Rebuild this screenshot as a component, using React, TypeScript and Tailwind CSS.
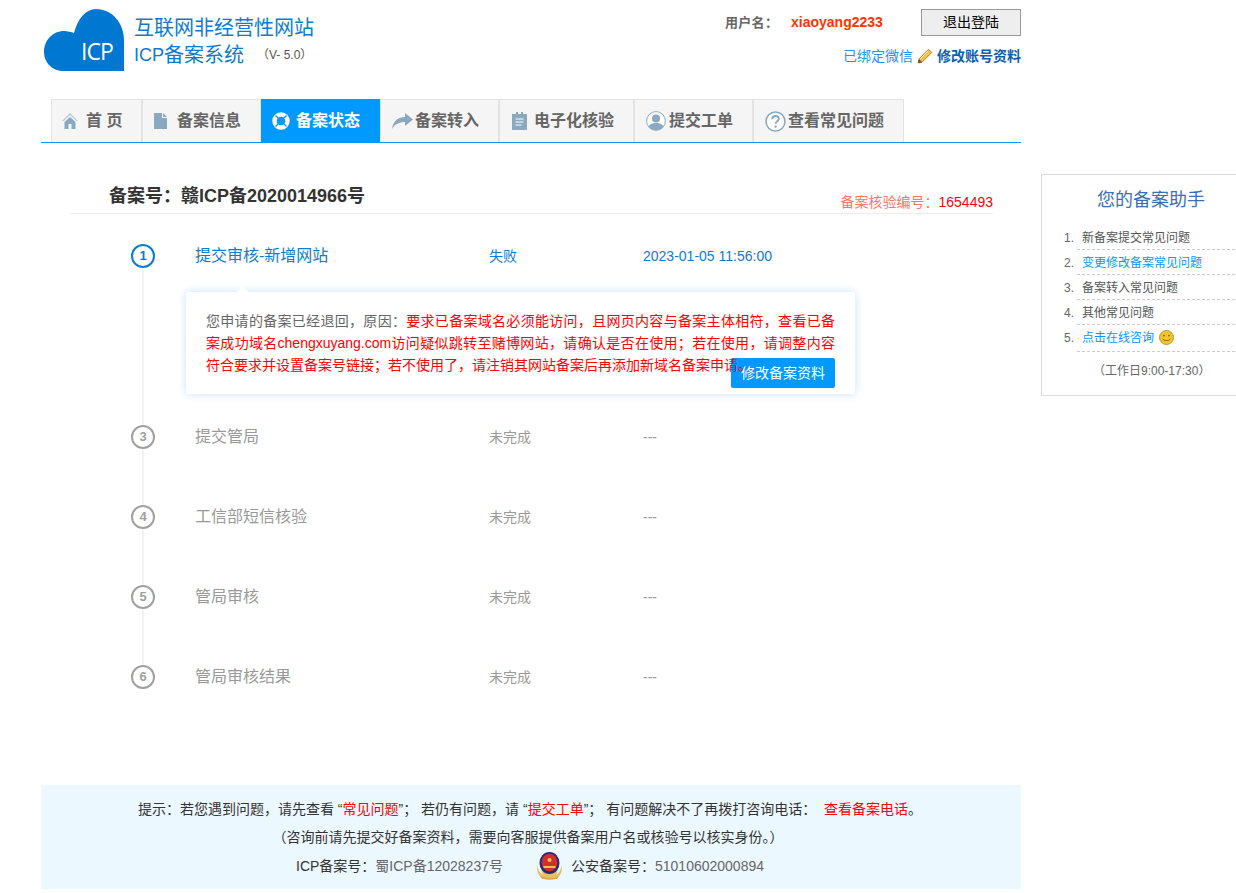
import React from "react";

const Home = () => (
  <svg width="16" height="18" viewBox="0 0 16 18" fill="#8aa8bf">
    <path d="M8 1 0 9h1.600L8 3l6.400 6H16Z" fill="#b7cad8" />
    <path d="M8 5 2.500 10v7h4v-5h3v5h4v-7Z" />
  </svg>
);
const FileIcon = () => (
  <svg width="13" height="16" viewBox="0 0 13 16" fill="#8aa8bf">
    <path d="M0 0h8v5h5v11H0Z" />
    <path d="M9 0l4 4H9Z" />
  </svg>
);
const Buoy = () => (
  <svg width="18" height="18" viewBox="0 0 18 18">
    <circle cx="9" cy="9" r="6.500" fill="none" stroke="#fff" strokeWidth="4.400" />
    <path d="M3.500 3.500 6.500 6.500M14.500 3.500l-3 3M3.500 14.500l3-3M14.500 14.500l-3-3" stroke="#0099ff" strokeWidth="1.300" />
  </svg>
);
const Arrow = () => (
  <svg width="21" height="16" viewBox="0 0 21 16" fill="#8aa8bf">
    <path d="M13 0l8 6.500L13 13V9C7 9 3 11 0 16 1 9 5 4 13 4Z" />
  </svg>
);
const Clip = () => (
  <svg width="15" height="18" viewBox="0 0 15 18">
    <path d="M0 2h4V0h2v2h3V0h2v2h4v16H0Z" fill="#8aa8bf" />
    <path d="M3.500 7h8M3.500 10h8M3.500 13h6" stroke="#fff" strokeWidth="1" />
  </svg>
);
const User = () => (
  <svg width="20" height="20" viewBox="0 0 20 20">
    <circle cx="10" cy="10" r="9.400" fill="#fff" stroke="#8aa8bf" strokeWidth="1" />
    <circle cx="10" cy="7.600" r="4" fill="#8aa8bf" />
    <path d="M2.600 15.500C4 12.500 7 12 10 12s6 .5 7.400 3.500A9 9 0 0 1 10 19a9 9 0 0 1-7.400-3.500Z" fill="#8aa8bf" />
  </svg>
);
const Question = () => (
  <svg width="21" height="21" viewBox="0 0 21 21">
    <circle cx="10.500" cy="10.500" r="9.500" fill="#fff" stroke="#8aa8bf" strokeWidth="1.600" />
    <path d="M7.200 8.200c0-2 1.500-3.200 3.400-3.200s3.200 1.100 3.200 2.800c0 2.500-3.200 2.500-3.200 5" fill="none" stroke="#8aa8bf" strokeWidth="1.900" />
    <circle cx="10.600" cy="15.600" r="1.200" fill="#8aa8bf" />
  </svg>
);
const Pencil = () => (
  <svg width="16" height="16" viewBox="0 0 16 16">
    <path d="M11.500 1.200 14.800 4.500 5 14.300 1.200 15 1.900 11Z" fill="#f2c14e" stroke="#a87a2a" strokeWidth="0.900" />
    <path d="M1.200 15l.7-4 3.100 3.300Z" fill="#6b4a24" />
    <path d="M3.500 10.500 11 3" stroke="#fff3c4" strokeWidth="1" />
  </svg>
);
const Smile = () => (
  <svg width="15" height="15" viewBox="0 0 15 15" className="inline-block ml-[5px] align-[-3px]">
    <circle cx="7.500" cy="7.500" r="7" fill="#f2c52a" stroke="#a88a20" strokeWidth="0.800" />
    <circle cx="5" cy="5.600" r="0.900" fill="#7a5a10" />
    <circle cx="10" cy="5.600" r="0.900" fill="#7a5a10" />
    <path d="M3.800 8.800c1 2.400 6.400 2.400 7.400 0" fill="none" stroke="#7a5a10" strokeWidth="0.900" />
  </svg>
);
const Emblem = () => (
  <svg width="29" height="30" viewBox="0 0 29 30">
    <path d="M14.500 29C6 29 1 23 2 14c1 5 3 8 6 10-2-4-3-8-2-11 2-6 15-6 17 0 1 3 0 7-2 11 3-2 5-5 6-10 1 9-4 15-12.500 15Z" fill="#e8bd6a" />
    <ellipse cx="14.500" cy="12" rx="10" ry="11" fill="#1c2a80" />
    <ellipse cx="14.500" cy="11.500" rx="8" ry="9" fill="#d22f2a" />
    <circle cx="14.500" cy="9" r="2" fill="#f2c14e" />
    <path d="M8.500 15h12v2h-12Z" fill="#f2c14e" />
    <path d="M5 25c5 3 14 3 19 0l-2 3H7Z" fill="#d9a344" />
  </svg>
);

const tabs = [
  { t: "首 页", w: "w-[91px]", pl: "pl-[10px]", gap: "gap-[8px]", icon: <Home /> },
  { t: "备案信息", w: "w-[119px]", pl: "pl-[11px]", gap: "gap-[10px]", icon: <FileIcon /> },
  { t: "备案状态", w: "w-[119px]", pl: "pl-[10px]", gap: "gap-[6px]", icon: <Buoy />, active: true },
  { t: "备案转入", w: "w-[119px]", pl: "pl-[11px]", gap: "gap-[2px]", icon: <Arrow /> },
  { t: "电子化核验", w: "w-[135px]", pl: "pl-[12px]", gap: "gap-[7px]", icon: <Clip /> },
  { t: "提交工单", w: "w-[119px]", pl: "pl-[11px]", gap: "gap-[3px]", icon: <User /> },
  { t: "查看常见问题", w: "w-[151px]", pl: "pl-[11px]", gap: "gap-[2px]", icon: <Question /> },
];

const steps = [
  { n: 3, t: "提交管局" },
  { n: 4, t: "工信部短信核验" },
  { n: 5, t: "管局审核" },
  { n: 6, t: "管局审核结果" },
];

const help = [
  { t: "新备案提交常见问题", c: "text-[#555]" },
  { t: "变更修改备案常见问题", c: "text-[#0099ff]" },
  { t: "备案转入常见问题", c: "text-[#555]" },
  { t: "其他常见问题", c: "text-[#555]" },
];

const font = "[font-family:'Liberation_Sans','Noto_Sans_CJK_SC',sans-serif]";

export default function App() {
  return (
    <div className={`${font} w-full overflow-hidden bg-white h-[893px] flex items-start`}>
      <div className="w-[980px] ml-[41px] shrink-0">
        {/* header */}
        <header className="h-[99px] flex justify-between items-start">
          <div className="flex items-start pl-[3px] pt-[9px]">
            <div className="relative w-[80px] h-[62px]">
              <svg width="80" height="62" viewBox="0 0 80 62">
                <path
                  d="M19 62C8 62 0 53 0 43 0 31 9 22 20 22c4 0 7 1 10 2C34 9 42 0 52 0c16 0 28 14 28 31v31Z"
                  fill="#0077d0"
                />
              </svg>
              <span className="absolute left-[37px] top-[27px] text-[23px] leading-[30px] text-white font-['Open_Sans'] tracking-[-1px]">
                ICP
              </span>
            </div>
            <div className="ml-[10px] pt-[6px] text-[#0a7cd0]">
              <div className="text-[20px] leading-[27px]">互联网非经营性网站</div>
              <div className="text-[20px] leading-[27px] flex items-center">
                <span className="text-[18px]">ICP</span>备案系统
                <span className="ml-[13px] text-[12px] text-[#555]">（V- 5.0）</span>
              </div>
            </div>
          </div>
          <div className="pt-[9px] flex flex-col items-end">
            <div className="flex items-center h-[27px]">
              <span className="text-[13px] font-bold text-[#666] w-[66px] tracking-[0.3px]">用户名：</span>
              <span className="text-[14px] font-bold text-[#ff3300] w-[130px]">xiaoyang2233</span>
              <button className="w-[100px] h-[27px] border border-[#999] bg-[#eeeeee] text-[14px] text-black">
                退出登陆
              </button>
            </div>
            <div className="flex items-center mt-[10px] h-[20px] text-[14px]">
              <span className="text-[#1a96f0]">已绑定微信</span>
              <span className="ml-[4px] mr-[4px] flex"><Pencil /></span>
              <span className="font-bold text-[#0b5fb0]">修改账号资料</span>
            </div>
          </div>
        </header>

        {/* nav */}
        <nav className="h-[44px] border-b border-[#0099ff] pl-[10px] flex">
          {tabs.map((tab) => (
            <div
              key={tab.t}
              className={`${tab.w} ${tab.pl} ${tab.gap} h-[43px] flex items-center text-[16px] font-bold border-t border-l border-r ${
                tab.active
                  ? "bg-[#0099ff] border-[#0099ff] text-white"
                  : "bg-[#f5f5f5] border-[#e3e3e3] text-[#666]"
              }`}
            >
              <span className="flex">{tab.icon}</span>
              <span className="whitespace-pre">{tab.t}</span>
            </div>
          ))}
        </nav>

        {/* main */}
        <main className="ml-[29px] w-[923px]">
          <div className="mt-[37px] h-[34px] border-b border-[#eeeeee] flex justify-between items-start">
            <h1 className="pl-[39px] text-[18px] font-bold leading-[32px] text-[#333]">备案号：赣ICP备2020014966号</h1>
            <div className="pt-[11px] text-[14px] leading-[22px]">
              <span className="text-[#ff7468]">备案核验编号：</span>
              <span className="text-[#ff0000]">1654493</span>
            </div>
          </div>

          <div className="relative mt-[22px]">
            <div className="absolute left-[72px] top-[20px] w-[2px] h-[420px] bg-[#f3f3f3]" />
            {/* step 1 */}
            <div className="relative h-[40px] flex items-center">
              <div className="ml-[61px] w-[24px] h-[24px] rounded-full border-2 border-[#0a7cd0] bg-white flex items-center justify-center text-[13px] font-bold text-[#0a7cd0]">
                1
              </div>
              <div className="ml-[40px] w-[294px] text-[16px] text-[#0a7cd0]">提交审核-新增网站</div>
              <div className="w-[154px] text-[14px] text-[#0a7cd0]">失败</div>
              <div className="text-[14px] text-[#0a7cd0]">2023-01-05 11:56:00</div>
            </div>
            {/* card */}
            <div className="relative mt-[16px] ml-[116px] w-[669px] h-[102px] bg-white rounded-[3px] shadow-[0_0_10px_rgba(0,115,230,0.22)] px-[20px] pt-[18px] text-[14px] leading-[22px] text-[#666]">
              <div className="absolute left-[52px] top-[-4px] w-[9px] h-[9px] rotate-45 bg-white" />
              <button className="absolute right-[20px] bottom-[6px] w-[104px] h-[30px] rounded-[2px] bg-[#0099ff] text-white text-[14px]">
                修改备案资料
              </button>
              <p className="relative text-justify">
                您申请的备案已经退回，原因：
                <span className="text-[#ff0000]">
                  要求已备案域名必须能访问，且网页内容与备案主体相符，查看已备案成功域名chengxuyang.com访问疑似跳转至赌博网站，请确认是否在使用；若在使用，请调整内容符合要求并设置备案号链接；若不使用了，请注销其网站备案后再添加新域名备案申请。
                </span>
              </p>
            </div>
            {/* remaining */}
            <div className="mt-[23px] flex flex-col gap-[40px]">
              {steps.map((s) => (
                <div key={s.n} className="relative h-[40px] flex items-center">
                  <div className="ml-[61px] w-[24px] h-[24px] rounded-full border-2 border-[#a0a0a0] bg-white flex items-center justify-center text-[13px] font-bold text-[#a0a0a0]">
                    {s.n}
                  </div>
                  <div className="ml-[40px] w-[294px] text-[16px] text-[#999]">{s.t}</div>
                  <div className="w-[154px] text-[14px] text-[#999]">未完成</div>
                  <div className="text-[14px] text-[#999]">---</div>
                </div>
              ))}
            </div>
          </div>
        </main>

        {/* footer */}
        <footer className="mt-[88px] h-[104px] bg-[#ecf8ff] pt-[10px] flex flex-col items-center text-[14px] leading-[28px] text-[#333] pr-[6px]">
          <div className="whitespace-pre ml-[4px]">
            提示：若您遇到问题，请先查看 “<span className="text-[#ff0000]">常见问题</span>”； 若仍有问题，请 “<span className="text-[#ff0000]">提交工单</span>”； 有问题解决不了再拨打咨询电话：  <span className="text-[#ff0000]">查看备案电话</span>。
          </div>
          <div>（咨询前请先提交好备案资料，需要向客服提供备案用户名或核验号以核实身份。）</div>
          <div className="flex items-center ml-[4px]">
            <span>ICP备案号：</span>
            <span className="text-[#666]">蜀ICP备12028237号</span>
            <span className="ml-[32px] mr-[7px] flex"><Emblem /></span>
            <span>公安备案号：</span>
            <span className="text-[#666]">51010602000894</span>
          </div>
        </footer>
      </div>

      {/* sidebar */}
      <aside className="ml-[20px] mt-[174px] w-[220px] h-[222px] shrink-0 border border-[#dddddd] bg-white">
        <div className="h-[50px] flex items-center justify-center text-[18px] text-[#3a6fb5]">您的备案助手</div>
        <ul className="pl-[35px] text-[12px]">
          {help.map((h, i) => (
            <li key={h.t} className="h-[25px] pl-[5px] pt-[2px] leading-[23px] border-b border-dashed border-[#cccccc] flex">
              <span className="w-[18px] -ml-[18px] text-[#666]">{i + 1}.</span>
              <span className={h.c}>{h.t}</span>
            </li>
          ))}
          <li className="h-[27px] pl-[5px] pt-[2px] leading-[23px] border-b border-dashed border-[#cccccc] flex">
            <span className="w-[18px] -ml-[18px] text-[#666]">5.</span>
            <span className="text-[#0099ff]">点击在线咨询<Smile /></span>
          </li>
        </ul>
        <div className="mt-[9px] pl-[51px] text-[12px] leading-[20px] text-[#666]">（工作日9:00-17:30）</div>
      </aside>
    </div>
  );
}
